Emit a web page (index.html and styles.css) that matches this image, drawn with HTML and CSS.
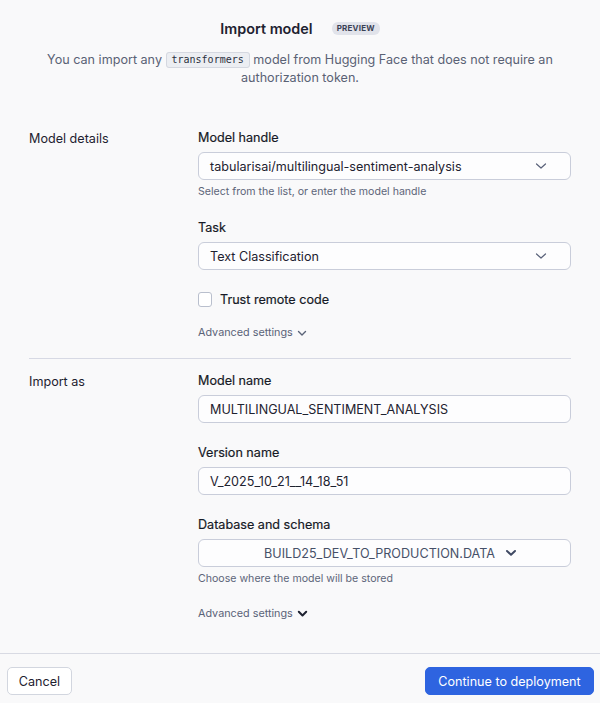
FILE: index.html
```html
<!DOCTYPE html>
<html>
<head>
<meta charset="utf-8">
<link rel="stylesheet" href="styles.css">
</head>
<body>
<div class="dialog">
  <header class="head">
    <div class="title-row">
      <h1 class="title">Import model</h1>
      <span class="badge">PREVIEW</span>
    </div>
    <p class="subtitle">You can import any <code class="chip">transformers</code> model from Hugging Face that does not require an authorization token.</p>
  </header>

  <section class="section first">
    <div class="section-label">Model details</div>
    <div class="fields">
      <div class="field">
        <label class="label">Model handle</label>
        <div class="input select">
          <span>tabularisai/multilingual-sentiment-analysis</span>
          <svg class="chev" width="12" height="8" viewBox="0 0 12 8"><path d="M1.5 2 L6 6 L10.5 2" fill="none" stroke="#596179" stroke-width="1.2" stroke-linecap="round" stroke-linejoin="round"/></svg>
        </div>
        <div class="help">Select from the list, or enter the model handle</div>
      </div>
      <div class="field">
        <label class="label">Task</label>
        <div class="input select">
          <span>Text Classification</span>
          <svg class="chev" width="12" height="8" viewBox="0 0 12 8"><path d="M1.5 2 L6 6 L10.5 2" fill="none" stroke="#596179" stroke-width="1.2" stroke-linecap="round" stroke-linejoin="round"/></svg>
        </div>
      </div>
      <div class="check-row">
        <span class="checkbox"></span>
        <span class="check-label">Trust remote code</span>
      </div>
      <div class="adv">Advanced settings
        <svg width="10" height="7" viewBox="0 0 10 7"><path d="M1.5 1.5 L5 5 L8.5 1.5" fill="none" stroke="#5a6378" stroke-width="1.4" stroke-linecap="round" stroke-linejoin="round"/></svg>
      </div>
    </div>
  </section>

  <div class="divider"></div>

  <section class="section second">
    <div class="section-label">Import as</div>
    <div class="fields">
      <div class="field">
        <label class="label">Model name</label>
        <div class="input"><span>MULTILINGUAL_SENTIMENT_ANALYSIS</span></div>
      </div>
      <div class="field">
        <label class="label">Version name</label>
        <div class="input"><span>V_2025_10_21__14_18_51</span></div>
      </div>
      <div class="field">
        <label class="label">Database and schema</label>
        <div class="input centered">
          <span class="db">BUILD25_DEV_TO_PRODUCTION.DATA</span>
          <svg width="12" height="8" viewBox="0 0 12 8"><path d="M2 2 L6 5.8 L10 2" fill="none" stroke="#3f4963" stroke-width="2" stroke-linecap="round" stroke-linejoin="round"/></svg>
        </div>
        <div class="help">Choose where the model will be stored</div>
      </div>
      <div class="adv adv2">Advanced settings
        <svg width="11" height="8" viewBox="0 0 11 8"><path d="M1.8 1.8 L5.5 5.5 L9.2 1.8" fill="none" stroke="#1e2230" stroke-width="2" stroke-linecap="round" stroke-linejoin="round"/></svg>
      </div>
    </div>
  </section>

  <footer class="footer">
    <button class="btn cancel">Cancel</button>
    <button class="btn primary">Continue to deployment</button>
  </footer>
</div>
</body>
</html>
```

FILE: styles.css
```css
* { box-sizing: border-box; }
html, body {
  margin: 0;
  padding: 0;
  background: #f9f9fa;
}
body {
  font-family: Inter, "Noto Sans", sans-serif;
  color: #1e2230;
  font-size: 12.6px;
}
.dialog {
  width: 600px;
  height: 703px;
  display: flex;
  flex-direction: column;
}
.head {
  padding-top: 19px;
  text-align: center;
}
.title-row {
  display: flex;
  justify-content: center;
  align-items: center;
  gap: 19px;
  height: 20px;
}
.title {
  margin: 0;
  font-size: 14.4px;
  font-weight: 600;
  line-height: 20px;
  color: #1e2230;
}
.badge {
  background: #e1e3ea;
  color: #3a4154;
  font-size: 8px;
  font-weight: 700;
  letter-spacing: 0.2px;
  padding: 2px 5px;
  border-radius: 6px;
  line-height: 9px;
  margin-top: -1px;
}
.subtitle {
  margin: 12px auto 0;
  width: 520px;
  font-size: 12.6px;
  line-height: 18px;
  color: #5a6275;
}
.chip {
  font-family: "DejaVu Sans Mono", "Liberation Mono", monospace;
  font-size: 10px;
  color: #2a3040;
  background: #eceef2;
  border: 1px solid #d5d8e0;
  border-radius: 3px;
  padding: 1px 5px 2px;
  vertical-align: 1px;
}
.section {
  display: grid;
  grid-template-columns: 169px 1fr;
  padding: 0 29px;
}
.section.first { margin-top: 43px; }
.section.second { margin-top: 14px; }
.section-label {
  font-size: 12.6px;
  line-height: 16px;
  margin-top: 1px;
  color: #1e2230;
}
.fields {
  display: flex;
  flex-direction: column;
}
.field {
  display: flex;
  flex-direction: column;
  margin-bottom: 22px;
}
.field:has(.help) { margin-bottom: 21px; }
.label {
  font-size: 12.6px;
  line-height: 16px;
  font-weight: 400;
  color: #161a26;
  margin-bottom: 6px;
  -webkit-text-stroke: 0.2px #161a26;
}
.input {
  height: 28px;
  border: 1px solid #c9cdda;
  border-radius: 6px;
  background: #fdfdfe;
  display: flex;
  align-items: center;
  padding: 0 11px;
  font-size: 12.6px;
  color: #1e2230;
}
.select { justify-content: space-between; }
.select .chev { margin-right: 12px; }
.centered {
  justify-content: center;
  gap: 10px;
  padding-left: 23px;
}
.db { color: #465068; }
.help {
  margin-top: 5px;
  font-size: 10.6px;
  line-height: 14px;
  color: #5d6579;
}
.check-row {
  display: flex;
  align-items: center;
  gap: 8px;
  margin-top: 0;
  height: 15px;
}
.checkbox {
  width: 14px;
  height: 15px;
  border: 1px solid #b9bfcd;
  border-radius: 3px;
  background: #fff;
}
.check-label {
  font-size: 12.6px;
  font-weight: 400;
  line-height: 16px;
  color: #161a26;
  -webkit-text-stroke: 0.2px #161a26;
}
.adv {
  margin-top: 19px;
  font-size: 10.8px;
  line-height: 14px;
  color: #5a6378;
  display: flex;
  align-items: center;
  gap: 4px;
}
.adv2 {
  margin-top: 0;
  color: #5a6378;
}
.divider {
  margin: 18px 29px 0;
  height: 1px;
  background: #d7d9e4;
}
.footer {
  margin-top: auto;
  border-top: 1px solid #d8dae3;
  height: 50px;
  display: flex;
  justify-content: space-between;
  align-items: flex-start;
  padding: 13px 6px 0 7px;
}
.btn {
  font-family: Inter, "Noto Sans", sans-serif;
  font-size: 12.6px;
  height: 28px;
  border-radius: 5px;
  cursor: pointer;
}
.cancel {
  width: 65px;
  background: #fff;
  border: 1px solid #d2d6df;
  color: #1e2230;
}
.primary {
  width: 169px;
  background: #2e64e0;
  border: 1px solid #2e64e0;
  color: #fff;
}
```
